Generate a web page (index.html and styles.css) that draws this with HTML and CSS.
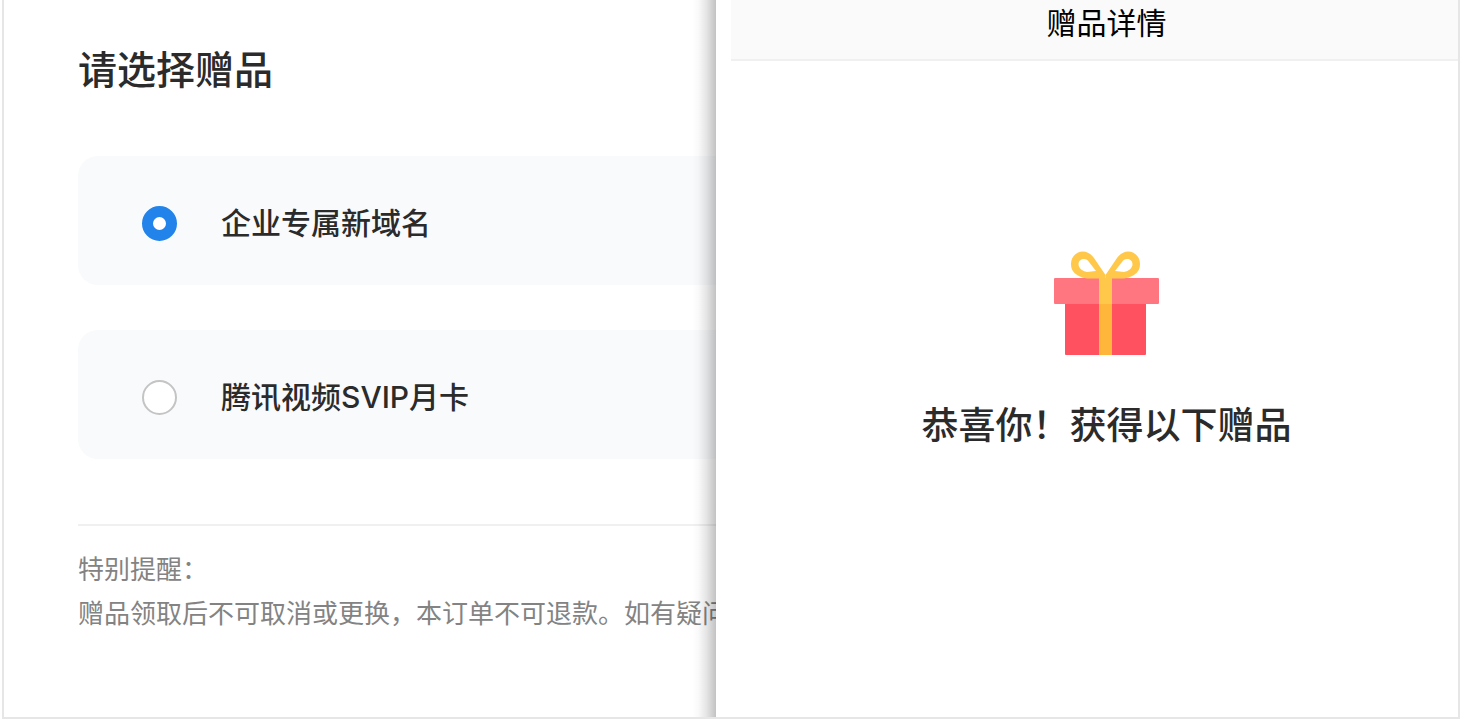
FILE: index.html
```html
<!DOCTYPE html>
<html lang="zh-CN">
<head>
    <meta charset="UTF-8">
    <meta name="viewport" content="width=device-width, initial-scale=1.0">
    <title>赠品详情</title>
    <link rel="stylesheet" href="styles.css">
</head>
<body>
    <div class="container">
        <form class="choose">
            <h1>请选择赠品</h1>
            <div class="options">
                <label class="option" for="giftDomain">
                    <input type="radio" id="giftDomain" name="gift" value="domain" checked>
                    <span>企业专属新域名</span>
                </label>
                <label class="option" for="giftVideo">
                    <input type="radio" id="giftVideo" name="gift" value="video">
                    <span>腾讯视频SVIP月卡</span>
                </label>
            </div>
            <div class="notice">
                <p>特别提醒：</p>
                <p>赠品领取后不可取消或更换，本订单不可退款。如有疑问</p>
            </div>
        </form>

        <div class="detail">
            <div class="screen">
                <div class="navbar">赠品详情</div>
                <svg class="gift" width="106" height="104" viewBox="0 0 106 104" aria-hidden="true">
                    <rect x="11" y="50" width="81" height="54" rx="1" fill="#ff5160"/>
                    <rect x="0" y="27" width="105" height="26" rx="1" fill="#ff7680"/>
                    <g fill="#ffc84a" fill-rule="evenodd">
                        <path d="M51.5 24L40 7C37 3 33 0.5 29 0.5C22 0.5 17 6 17 13C17 19 20 23 26 25.5C29 27 32 27.500 36 27.500H51.500ZM24.500 13C24.500 10 27 8 30 8C32 8 34 9 35 11L42 20L33 21C28 20 24.500 17 24.500 13Z"/>
                        <path transform="matrix(-1 0 0 1 103 0)" d="M51.5 24L40 7C37 3 33 0.5 29 0.5C22 0.5 17 6 17 13C17 19 20 23 26 25.5C29 27 32 27.500 36 27.500H51.500ZM24.500 13C24.500 10 27 8 30 8C32 8 34 9 35 11L42 20L33 21C28 20 24.500 17 24.500 13Z"/>
                    </g>
                    <rect x="45" y="27" width="13" height="26" fill="#ffc84a"/>
                    <rect x="45" y="53" width="13" height="51" fill="#ffb63a"/>
                </svg>
                <h2>恭喜你！获得以下赠品</h2>
            </div>
        </div>
    </div>
</body>
</html>
```
FILE: styles.css
```css
* {
    box-sizing: border-box;
}
body {
    font-family: Inter, "Noto Sans CJK SC", sans-serif;
    margin: 0;
    background-color: #fff;
    color: #2b2b2b;
}
h1, h2, p {
    margin: 0;
}
.container {
    display: grid;
    grid-template-columns: 712fr 742fr;
    min-height: calc(100vh - 3px);
    margin: 0 2px 3px;
    border: 2px solid #e6e6e6;
    border-top: none;
    overflow: hidden;
}
.choose {
    min-width: 0;
    padding: 40px 0 0 74px;
    overflow: hidden;
}
h1 {
    font-size: 39px;
    font-weight: 500;
    line-height: 60px;
}
.options {
    display: grid;
    gap: 45px;
    margin-top: 56px;
}
.option {
    display: flex;
    align-items: center;
    gap: 44px;
    height: 129px;
    padding: 6px 0 0 64px;
    border-radius: 20px 0 0 20px;
    background-color: #f9fafc;
    font-size: 30px;
    font-weight: 500;
    cursor: pointer;
}
.option span {
    padding-bottom: 6px;
}
.option input {
    appearance: none;
    width: 35px;
    height: 35px;
    margin: 0;
    border: 2px solid #c4c4c4;
    border-radius: 50%;
    background-color: #fff;
}
.option input:checked {
    border: 11px solid #2283ea;
}
.notice {
    margin-top: 65px;
    padding-top: 22px;
    border-top: 2px solid #f0f0f0;
    color: #838383;
    font-size: 26px;
    line-height: 44px;
    white-space: nowrap;
}
.detail {
    position: relative;
    min-width: 0;
    padding-left: 15px;
    background-color: #fff;
}
/* shadow that the panel casts on the list */
.detail::before {
    content: "";
    position: absolute;
    top: 0;
    bottom: 0;
    right: 100%;
    width: 24px;
    background: linear-gradient(to left, rgba(0, 0, 0, 0.24), rgba(0, 0, 0, 0.1) 40%, rgba(0, 0, 0, 0.02) 75%, transparent);
}
/* the screen runs past the right edge of the frame */
.screen {
    display: flex;
    flex-direction: column;
    align-items: center;
    margin-right: -24px;
}
.navbar {
    align-self: stretch;
    height: 61px;
    background-color: #fafafa;
    border-bottom: 2px solid #f0f0f0;
    color: #000;
    font-size: 30px;
    line-height: 46px;
    text-align: center;
}
.gift {
    margin-top: 190px;
}
h2 {
    margin-top: 41px;
    font-size: 37px;
    font-weight: 500;
    line-height: 60px;
}
```
